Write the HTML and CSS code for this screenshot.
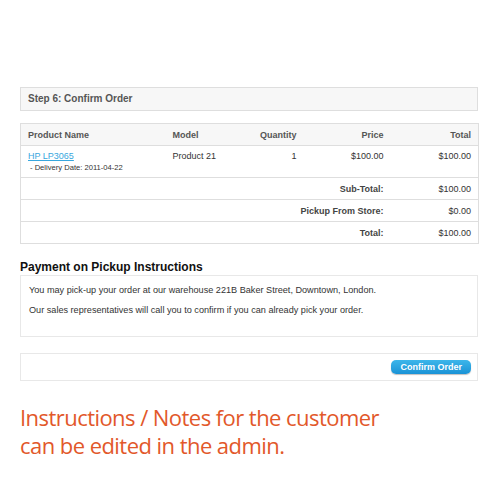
FILE: index.html
```html
<!DOCTYPE html>
<html lang=en>
    <head>
        <meta charset="utf8">
        <title>Checkout - Confirm Order</title>
        <link rel="stylesheet" href="styles.css">
    </head>
    <body>
        <div class="page">
            <div class="step">Step 6: Confirm Order</div>
            <table class="order">
                <colgroup>
                    <col class="c-name">
                    <col class="c-model">
                    <col class="c-qty">
                    <col class="c-price">
                    <col class="c-total">
                </colgroup>
                <thead>
                    <tr>
                        <th class="left">Product Name</th>
                        <th class="left">Model</th>
                        <th>Quantity</th>
                        <th>Price</th>
                        <th>Total</th>
                    </tr>
                </thead>
                <tbody>
                    <tr class="product">
                        <td class="left">
                            <a href="#">HP LP3065</a>
                            <small>- Delivery Date: 2011-04-22</small>
                        </td>
                        <td class="left">Product 21</td>
                        <td>1</td>
                        <td>$100.00</td>
                        <td>$100.00</td>
                    </tr>
                </tbody>
                <tfoot>
                    <tr>
                        <td colspan="4"><b>Sub-Total:</b></td>
                        <td>$100.00</td>
                    </tr>
                    <tr>
                        <td colspan="4"><b>Pickup From Store:</b></td>
                        <td>$0.00</td>
                    </tr>
                    <tr>
                        <td colspan="4"><b>Total:</b></td>
                        <td>$100.00</td>
                    </tr>
                </tfoot>
            </table>
            <h2>Payment on Pickup Instructions</h2>
            <div class="content">
                <p>You may pick-up your order at our warehouse 221B Baker Street, Downtown, London.</p>
                <p>Our sales representatives will call you to confirm if you can already pick your order.</p>
            </div>
            <div class="buttons">
                <a href="#" class="button">Confirm Order</a>
            </div>
            <p class="note">Instructions / Notes for the customer<br>can be edited in the admin.</p>
        </div>
    </body>
</html>
```

FILE: styles.css
```css
body {
    margin: 0;
    background: #fff;
    color: #333;
    font-family: "Liberation Sans", Arial, sans-serif;
    font-size: 9px;
}
.page {
    width: 458px;
    padding: 87px 0 0 20px;
}
.step {
    height: 22px;
    line-height: 22px;
    padding: 0 7px;
    background: #f7f7f7;
    border: 1px solid #dedede;
    color: #555;
    font-size: 10px;
    font-weight: bold;
}
.order {
    width: 100%;
    margin-top: 12px;
    border-collapse: collapse;
    table-layout: fixed;
    border: 1px solid #dedede;
}
.c-name { width: 145px; }
.c-model { width: 80px; }
.c-qty { width: 58px; }
.c-price { width: 87px; }
.c-total { width: 88px; }
.order th, .order td {
    padding: 0 7px;
    height: 21px;
    text-align: right;
    border-bottom: 1px solid #dedede;
}
.order th {
    background: #f7f7f7;
    color: #555;
    font-weight: bold;
}
.order .left {
    text-align: left;
}
.order .product td {
    height: 26px;
    vertical-align: top;
    padding-top: 5px;
}
.order a {
    color: #38a7de;
    text-decoration: underline;
}
.order small {
    display: block;
    margin: 2px 0 0 2px;
    font-size: 7.6px;
    color: #333;
}
.order b {
    color: #444;
}
h2 {
    margin: 16px 0 1px;
    font-size: 12px;
    color: #111;
}
.content {
    height: 60px;
    padding: 0 8px;
    border: 1px solid #e8e8e8;
    font-size: 9.15px;
}
.content p {
    margin: 9px 0 0;
}
.content p + p {
    margin-top: 10px;
}
.buttons {
    display: flex;
    justify-content: flex-end;
    align-items: center;
    height: 26px;
    margin-top: 16px;
    padding: 0 6px;
    border: 1px solid #e8e8e8;
}
.button {
    padding: 2px 9px;
    border-radius: 5px;
    background: linear-gradient(#3cb6ea, #1a93d6);
    box-shadow: 0 1px 1px rgba(0, 0, 0, 0.25);
    color: #fff;
    font-weight: bold;
    text-decoration: none;
}
.note {
    margin: 22px 0 0;
    font-family: "Open Sans", sans-serif;
    font-size: 22px;
    line-height: 28px;
    letter-spacing: -0.55px;
    color: #e2582a;
}
```
